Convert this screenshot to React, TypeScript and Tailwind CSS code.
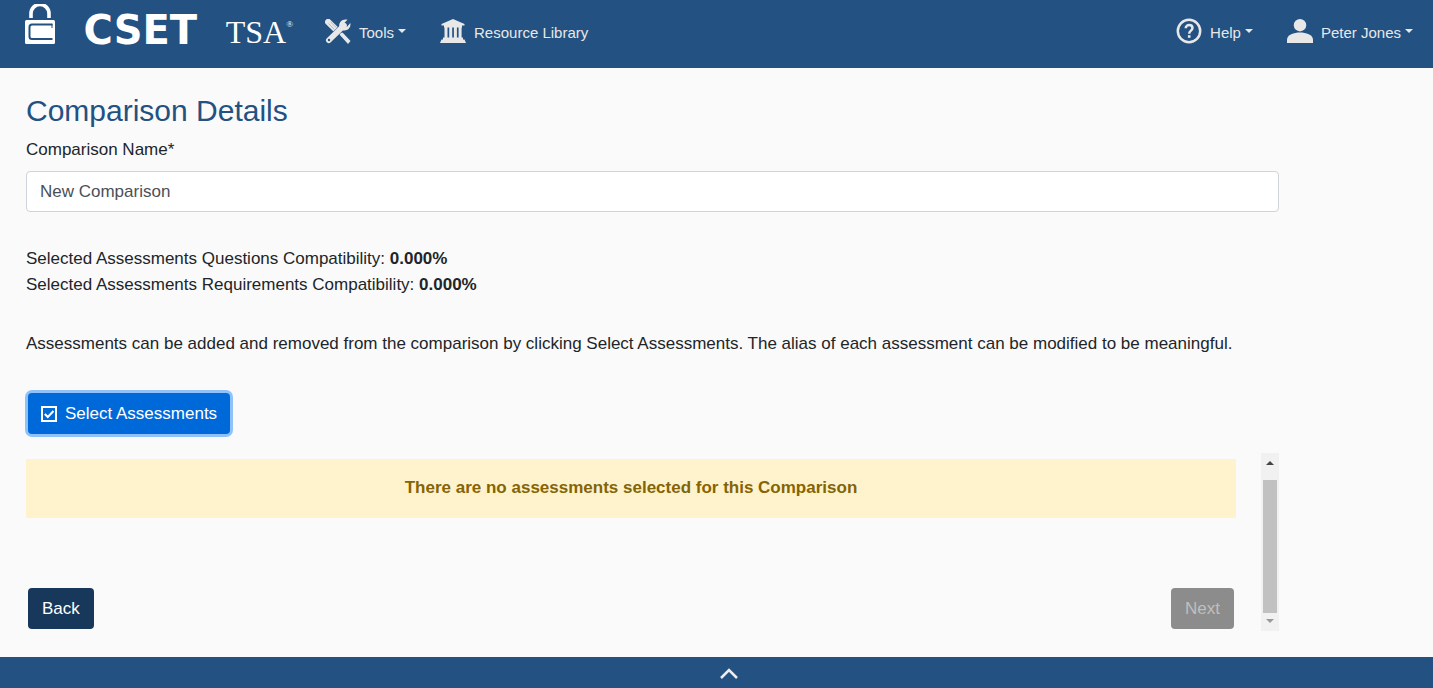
import React, { useState } from "react";

function Caret() {
  return (
    <svg viewBox="0 0 8 4" className="mb-1 ml-1 h-1 w-2" fill="currentColor" aria-hidden="true">
      <path d="M0 0h8L4 4z" />
    </svg>
  );
}

function LockMark() {
  return (
    <svg viewBox="0 0 30 40" className="h-10 w-[30px] shrink-0" aria-hidden="true">
      <path d="M6 14V9.500a9 9 0 0 1 18 0V14" fill="none" stroke="#fff" strokeWidth="3.600" />
      <rect x="0" y="16" width="30" height="24" rx="1.500" fill="#fff" />
      <path d="M27.500 20.500H7Q4.500 20.500 4.500 23V32.500Q4.500 35 7 35H27.500" fill="none" stroke="#225182" strokeWidth="2" />
      <path d="M27 20v4" fill="none" stroke="#225182" strokeWidth="1" />
    </svg>
  );
}

function ToolsIcon() {
  return (
    <svg viewBox="0 0 26 25" className="h-[25px] w-[26px]" aria-hidden="true">
      <path d="M3.200 3L12 11.500" stroke="#e8e8e8" strokeWidth="6.200" strokeLinecap="round" />
      <path d="M3.500 4.500l6 6M5.500 2.800l6 6" stroke="#225182" strokeWidth="0.300" />
      <path d="M11 10L22.500 21.500" stroke="#e8e8e8" strokeWidth="2.500" />
      <path d="M15 16l2.500-2.500 8 8.500-2.500 3z" fill="#e8e8e8" />
      <path d="M3.800 21.500L18 7.500" stroke="#225182" strokeWidth="6.600" />
      <path d="M3.800 21.300L19 6.500" stroke="#e8e8e8" strokeWidth="5.600" strokeLinecap="round" />
      <path d="M22.500.8L18.800 4.400l.5 2.800 2.800.5L25.300 4c1 4.500-2.800 8.300-7.500 7.200l-3.500-3.400C13.500 3.300 17.500-.8 22.500.8z" fill="#e8e8e8" />
      <circle cx="4" cy="21" r="1.200" fill="#225182" />
    </svg>
  );
}

function LibraryIcon() {
  return (
    <svg viewBox="0 0 26 24" className="h-6 w-[26px]" fill="#e8e8e8" aria-hidden="true">
      <path d="M13 0L24.500 5v1.500H22V8.500H4V6.500H1.500V5zM4.500 8.500h3V19h-3zM9.200 8.500h3V19h-3zM13.900 8.500h3V19h-3zM18.600 8.500h3V19h-3zM3 18.500h20v2h1.500L26 24H0l1.500-3.500H3z" />
    </svg>
  );
}

function HelpIcon() {
  return (
    <svg viewBox="0 0 26 26" className="h-[26px] w-[26px]" fill="none" stroke="#e8e8e8" aria-hidden="true">
      <circle cx="13" cy="13" r="11.200" strokeWidth="2.500" />
      <path d="M9.700 10.300c0-4.400 6.800-4.200 6.800-.2 0 2.500-3.300 2.700-3.300 5.600" strokeWidth="2.500" />
      <path d="M13.200 17.200v2.600" strokeWidth="2.600" />
    </svg>
  );
}

function UserIcon() {
  return (
    <svg viewBox="0 0 26 24" className="h-6 w-[26px]" fill="#e8e8e8" aria-hidden="true">
      <circle cx="13" cy="6.200" r="6.200" />
      <path d="M0 24v-3.500C0 16 7 13.500 13 13.500S26 16 26 20.500V24z" />
    </svg>
  );
}

function CheckIcon() {
  return (
    <svg viewBox="0 0 16 16" className="h-4 w-4" fill="none" stroke="#fff" strokeWidth="2" aria-hidden="true">
      <rect x="1" y="1" width="14" height="14" />
      <path d="M3.800 8l3 3L12.500 5" />
    </svg>
  );
}

function ScrollRail() {
  return (
    <div className="flex w-[18px] flex-col items-center bg-[#f1f1f1] py-2" aria-hidden="true">
      <svg viewBox="0 0 8 4" className="h-1 w-2" fill="#444">
        <path d="M0 4h8L4 0z" />
      </svg>
      <div className="mt-[15px] mb-1.5 w-[14px] flex-1 bg-[#c1c1c1]" />
      <svg viewBox="0 0 8 4" className="h-1 w-2" fill="#999">
        <path d="M0 0h8L4 4z" />
      </svg>
    </div>
  );
}

export default function App() {
  const [name, setName] = useState("New Comparison");
  return (
    <div className="flex min-h-screen flex-col bg-[#fafafa] font-['Liberation_Sans',Arial,sans-serif] text-[17px] leading-[26px] text-[#212529]">
      <header className="flex h-[68px] items-start bg-[#225182] pr-5 pl-[25px] text-[15px] text-[#e8e8e8]">
        <a href="#home" className="flex w-[268px] items-start justify-between pt-1 text-white">
          <LockMark />
          <span className="font-['DejaVu_Sans',sans-serif] text-[40px] leading-[53px] font-bold">CSET</span>
          <span className="flex font-['Liberation_Serif',serif] text-[32px] leading-[56px]">
            TSA<sup className="top-0 pt-3.5 text-[9px] leading-3">®</sup>
          </span>
        </a>
        <nav className="flex flex-1 items-center pt-4">
          <button type="button" className="ml-8 flex items-center gap-2">
            <ToolsIcon />
            <span className="flex items-center pt-1">Tools<Caret /></span>
          </button>
          <a href="#library" className="ml-[34px] flex items-center gap-2">
            <LibraryIcon />
            <span className="pt-1">Resource Library</span>
          </a>
          <button type="button" className="ml-auto flex items-center gap-2">
            <HelpIcon />
            <span className="flex items-center pt-1">Help<Caret /></span>
          </button>
          <button type="button" className="ml-[34px] flex items-center gap-2">
            <UserIcon />
            <span className="flex items-center pt-1">Peter Jones<Caret /></span>
          </button>
        </nav>
      </header>

      <main className="w-full max-w-[1279px] flex-1 pt-6 pb-[26px] pl-[26px]">
        <h1 className="text-[30px] leading-[38px] text-[#225182]">Comparison Details</h1>
        <label htmlFor="comparison-name" className="mt-[7px] block">Comparison Name*</label>
        <input
          id="comparison-name"
          value={name}
          onChange={(e) => setName(e.target.value)}
          className="mt-2 block h-[41px] w-full rounded-sm border border-[#ced4da] bg-white px-[13px] text-[#495057]"
        />
        <p className="mt-[34px]">Selected Assessments Questions Compatibility: <strong>0.000%</strong></p>
        <p>Selected Assessments Requirements Compatibility: <strong>0.000%</strong></p>
        <p className="mt-[33px]">
          Assessments can be added and removed from the comparison by clicking Select Assessments. The alias of each assessment can be modified to be meaningful.
        </p>
        <button type="button" className="mt-9 ml-0.5 flex h-[41px] items-center gap-2 rounded-sm bg-[#0069d9] px-[13px] text-white ring-3 ring-[#8fc2fa]">
          <CheckIcon />
          Select Assessments
        </button>
        <div className="mt-[19px] flex gap-[25px]">
          <div className="flex-1 pt-1.5 pb-0.5">
            <p className="bg-[#fff3cd] pt-4 pb-[17px] text-center font-bold text-[#856404]" role="status">
              There are no assessments selected for this Comparison
            </p>
            <div className="mt-[70px] flex justify-between px-0.5">
              <button type="button" className="h-[41px] rounded-sm bg-[#17375b] px-3.5 text-white">Back</button>
              <button type="button" disabled className="h-[41px] rounded-sm bg-[#8c8c8c] px-3.5 text-[#bfbfbf]">Next</button>
            </div>
          </div>
          <ScrollRail />
        </div>
      </main>

      <footer className="flex h-[31px] items-center justify-center bg-[#225182] pl-6">
        <button type="button" aria-label="Expand footer">
          <svg viewBox="0 0 18 12" className="h-3 w-[18px]" fill="none" stroke="#eee" strokeWidth="2.500" aria-hidden="true">
            <path d="M1 11L9 3l8 8" />
          </svg>
        </button>
      </footer>
    </div>
  );
}
